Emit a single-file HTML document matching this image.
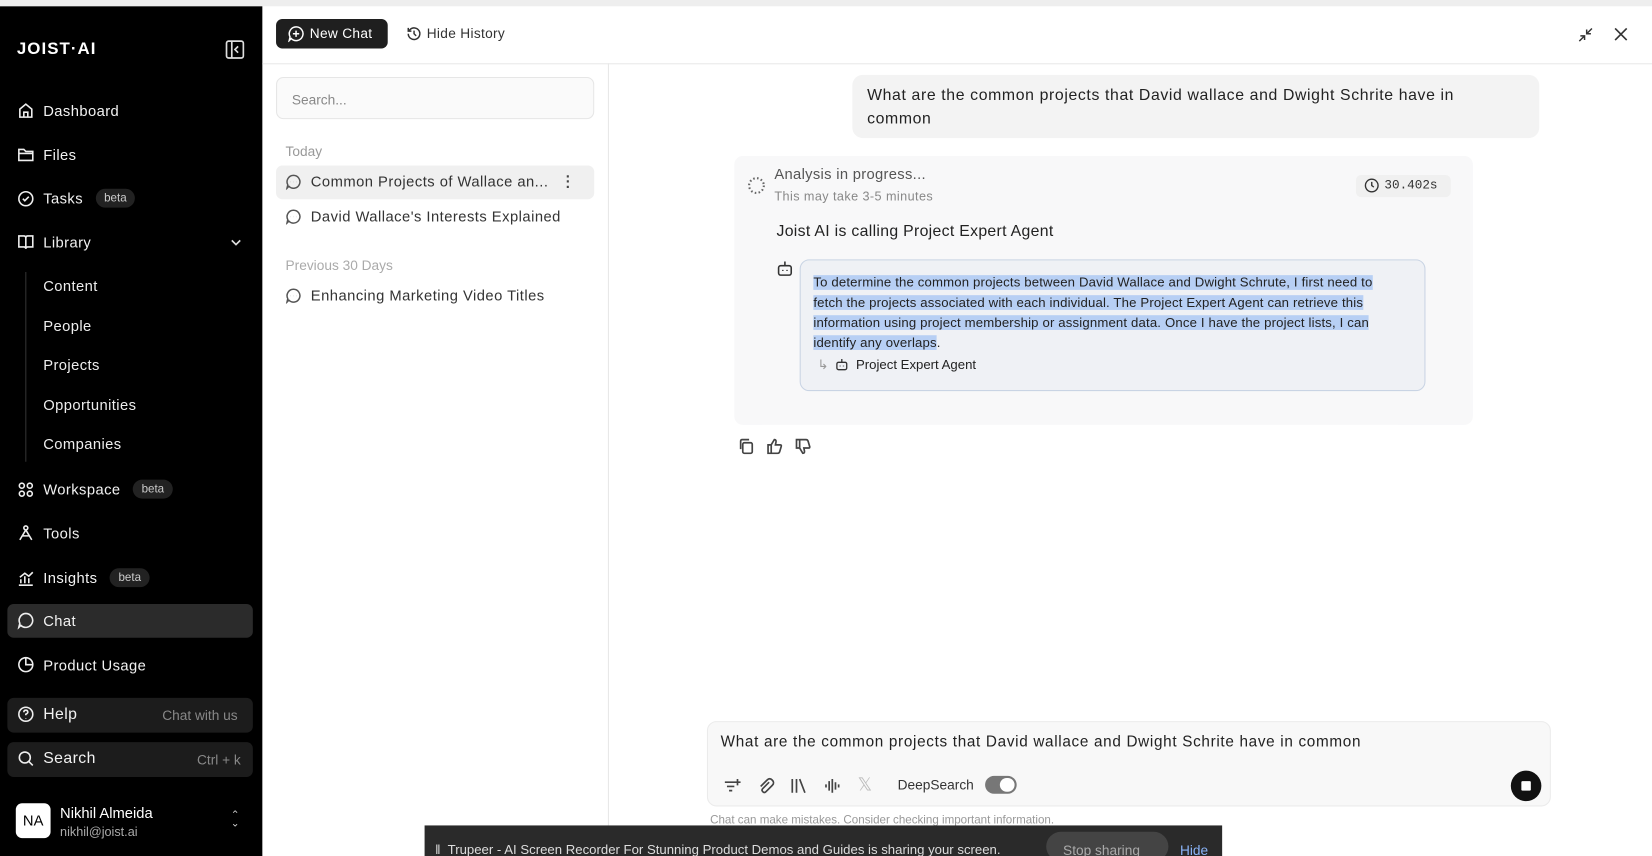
<!DOCTYPE html>
<html><head><meta charset="utf-8"><style>
*{box-sizing:border-box;margin:0;padding:0}
html,body{width:1652px;height:856px;overflow:hidden;background:#fff;font-family:"Liberation Sans",sans-serif}
#w{width:1568px;height:812px;transform:scale(1.05357,1.05419);transform-origin:0 0;position:relative;background:#fff}
.a{position:absolute}
.sb{left:0;top:6px;width:249px;height:806px;background:#000;color:#fff}
.ni{position:absolute;left:16px;font-size:14px;display:flex;align-items:center;gap:8px;color:#f2f2f2;letter-spacing:0.4px}
.ni svg{width:17px;height:17px;stroke:#eee;fill:none;stroke-width:1.6}
.sub{position:absolute;left:41px;font-size:14px;color:#eee;letter-spacing:0.4px}
.beta{background:#222;color:#ccc;font-size:11px;border-radius:10px;padding:3px 8px;margin-left:4px;letter-spacing:0}
.hist{font-size:14px;color:#333;display:flex;align-items:center;gap:9px;position:absolute;left:271px;letter-spacing:0.45px}
.hist svg{width:15px;height:15px;stroke:#555;fill:none;stroke-width:1.5}
.ic{stroke:#444;fill:none;stroke-width:1.6}
</style></head><body><div id="w">
<div class="a" style="left:0;top:0;width:1568px;height:6px;background:#eee"></div>
<div class="a sb">
 <div class="a" style="left:16px;top:32px;font-size:16px;font-weight:bold;letter-spacing:1px">JOIST·AI</div>
 <svg class="a" style="left:214px;top:32px" width="18" height="18" viewBox="0 0 18 18" fill="none" stroke="#ddd" stroke-width="1.6"><rect x="1" y="1" width="16" height="16" rx="2"/><path d="M6 1v16M12 6l-3 3 3 3"/></svg>
</div>
<div class="ni" style="top:96px"><svg viewBox="0 0 18 18"><path d="M3 8l6-5 6 5v8H3z M7 16v-5h4v5"/></svg>Dashboard</div>
<div class="ni" style="top:138px"><svg viewBox="0 0 18 18"><path d="M2 4h5l2 2h7v9H2z M2 8h14"/></svg>Files</div>
<div class="ni" style="top:179px"><svg viewBox="0 0 18 18"><circle cx="9" cy="9" r="7"/><path d="M6 9l2 2 4-4"/></svg>Tasks<span class="beta">beta</span></div>
<div class="ni" style="top:221px"><svg viewBox="0 0 18 18"><path d="M2 3h5q2 0 2 2v11q0-2-2-2H2zM16 3h-5q-2 0-2 2v11q0-2 2-2h5z"/></svg>Library</div>
<svg class="a" style="left:218px;top:225px" width="12" height="10" viewBox="0 0 12 10" fill="none" stroke="#ddd" stroke-width="1.6"><path d="M2 3l4 4 4-4"/></svg>
<div class="a" style="left:24px;top:258px;width:1px;height:180px;background:#333"></div>
<div class="sub" style="top:263px">Content</div>
<div class="sub" style="top:301px">People</div>
<div class="sub" style="top:338px">Projects</div>
<div class="sub" style="top:376px">Opportunities</div>
<div class="sub" style="top:413px">Companies</div>
<div class="ni" style="top:455px"><svg viewBox="0 0 18 18"><circle cx="5" cy="5" r="2.5"/><circle cx="13" cy="5" r="2.5"/><circle cx="5" cy="13" r="2.5"/><circle cx="13" cy="13" r="2.5"/></svg>Workspace<span class="beta">beta</span></div>
<div class="ni" style="top:497px"><svg viewBox="0 0 18 18"><circle cx="9" cy="4" r="2"/><path d="M9 6L3 16M9 6l6 10M5 12h8"/></svg>Tools</div>
<div class="ni" style="top:539px"><svg viewBox="0 0 18 18"><path d="M2 16h14M4 14V10M8 14V7M12 14V9M3 8l5-4 4 3 4-4"/></svg>Insights<span class="beta">beta</span></div>
<div class="a" style="left:7px;top:573px;width:233px;height:32px;background:#2b2b2b;border-radius:6px"></div>
<div class="ni" style="top:580px"><svg viewBox="0 0 18 18"><path d="M9 2a7 7 0 1 1-5 12L2 16l1-4A7 7 0 0 1 9 2z"/></svg>Chat</div>
<div class="ni" style="top:622px"><svg viewBox="0 0 18 18"><circle cx="9" cy="9" r="7"/><path d="M9 2v7h7"/></svg>Product Usage</div>
<div class="a" style="left:7px;top:662px;width:233px;height:33px;background:#1c1c1c;border-radius:6px"></div>
<div class="ni" style="top:669px;font-size:15px"><svg viewBox="0 0 18 18"><circle cx="9" cy="9" r="7"/><path d="M7 7q0-2 2-2t2 2q0 1-2 2v1M9 13v.5"/></svg>Help</div>
<div class="a" style="left:154px;top:671px;font-size:13px;color:#888">Chat with us</div>
<div class="a" style="left:7px;top:704px;width:233px;height:33px;background:#1c1c1c;border-radius:6px"></div>
<div class="ni" style="top:711px;font-size:15px"><svg viewBox="0 0 18 18"><circle cx="8" cy="8" r="5.5"/><path d="M12 12l4 4"/></svg>Search</div>
<div class="a" style="left:187px;top:713px;font-size:13px;color:#888">Ctrl + k</div>
<div class="a" style="left:15px;top:762px;width:33px;height:33px;background:#fff;border-radius:6px;color:#000;font-size:14px;text-align:center;line-height:33px">NA</div>
<div class="a" style="left:57px;top:763px;font-size:14px;color:#fff">Nikhil Almeida</div>
<div class="a" style="left:57px;top:782px;font-size:12px;color:#aaa">nikhil@joist.ai</div>
<div class="a" style="left:219px;top:770px;color:#ccc;font-size:10px;line-height:8px">⌃<br>⌄</div>

<div class="a" style="left:249px;top:60px;width:1319px;height:1px;background:#e8e8e8"></div>
<div class="a" style="left:577px;top:60px;width:1px;height:752px;background:#e8e8e8"></div>
<div class="a" style="left:262px;top:18px;width:106px;height:28px;background:#1f1f1f;border-radius:6px;color:#fff;font-size:13px;line-height:28px;padding-left:32px;letter-spacing:0.3px">New Chat</div>
<svg class="a" style="left:273px;top:24px" width="16" height="16" viewBox="0 0 16 16" fill="none" stroke="#fff" stroke-width="1.4"><path d="M8 1.5a6.5 6.5 0 1 1-4.6 11L1.5 14.5l.8-3.5A6.5 6.5 0 0 1 8 1.5zM8 5v6M5 8h6"/></svg>
<svg class="a" style="left:385px;top:24px" width="16" height="16" viewBox="0 0 16 16" fill="none" stroke="#333" stroke-width="1.4"><path d="M2.5 8a5.5 5.5 0 1 0 1.6-3.9L2.5 5.5M2.5 2.5v3h3M8 5v3l2 2"/></svg>
<div class="a" style="left:405px;top:24px;font-size:13px;color:#333;letter-spacing:0.3px">Hide History</div>
<svg class="a" style="left:1497px;top:25px" width="16" height="16" viewBox="0 0 16 16" fill="none" stroke="#333" stroke-width="1.4"><path d="M2 14l5-5M3 9h4v4M14 2l-5 5M9 3v4h4"/></svg>
<svg class="a" style="left:1532px;top:26px" width="13" height="13" viewBox="0 0 13 13" fill="none" stroke="#333" stroke-width="1.6"><path d="M1 1l11 11M12 1L1 12"/></svg>

<div class="a" style="left:262px;top:73px;width:302px;height:40px;background:#fafafa;border:1px solid #e6e6e6;border-radius:7px;font-size:13px;color:#888;padding:13px 14px">Search...</div>
<div class="a" style="left:271px;top:136px;font-size:13px;color:#999">Today</div>
<div class="a" style="left:262px;top:157px;width:302px;height:32px;background:#f0f0f0;border-radius:6px"></div>
<div class="hist" style="top:164px"><svg viewBox="0 0 16 16"><path d="M8 1.5a6.5 6.5 0 1 1-4.6 11L1.5 14.5l.8-3.5A6.5 6.5 0 0 1 8 1.5z"/><path d="M5 8h.1M8 8h.1M11 8h.1"/></svg>Common Projects of Wallace an...</div>
<div class="a" style="left:537px;top:165px;font-size:14px;color:#444;font-weight:bold;line-height:5px">·<br>·<br>·</div>
<div class="hist" style="top:197px"><svg viewBox="0 0 16 16"><path d="M8 1.5a6.5 6.5 0 1 1-4.6 11L1.5 14.5l.8-3.5A6.5 6.5 0 0 1 8 1.5z"/><path d="M5 8h.1M8 8h.1M11 8h.1"/></svg>David Wallace's Interests Explained</div>
<div class="a" style="left:271px;top:244px;font-size:13px;color:#aaa">Previous 30 Days</div>
<div class="hist" style="top:272px"><svg viewBox="0 0 16 16"><path d="M8 1.5a6.5 6.5 0 1 1-4.6 11L1.5 14.5l.8-3.5A6.5 6.5 0 0 1 8 1.5z"/><path d="M5 8h.1M8 8h.1M11 8h.1"/></svg>Enhancing Marketing Video Titles</div>

<div class="a" style="left:809px;top:71px;width:652px;height:60px;background:#f3f3f3;border-radius:10px;font-size:15px;color:#222;padding:9px 40px 9px 14px;line-height:22px;letter-spacing:0.6px">What are the common projects that David wallace and Dwight Schrite have in common</div>
<div class="a" style="left:697px;top:148px;width:701px;height:255px;background:#f8f8f9;border-radius:8px"></div>
<svg class="a" style="left:709px;top:167px" width="18" height="18" viewBox="0 0 18 18" fill="none" stroke="#666" stroke-width="2" stroke-dasharray="1.5 2.2"><circle cx="9" cy="9" r="7"/></svg>
<div class="a" style="left:735px;top:157px;font-size:14px;color:#555;letter-spacing:0.3px">Analysis in progress...</div>
<div class="a" style="left:735px;top:179px;font-size:12px;color:#888;letter-spacing:0.4px">This may take 3-5 minutes</div>
<div class="a" style="left:1287px;top:166px;width:90px;height:21px;background:#f0f0f0;border-radius:5px;font-family:'Liberation Mono',monospace;font-size:12px;color:#333;line-height:21px;padding-left:27px">30.402s</div>
<svg class="a" style="left:1295px;top:169px" width="14" height="14" viewBox="0 0 14 14" fill="none" stroke="#333" stroke-width="1.3"><circle cx="7" cy="7" r="6"/><path d="M7 3.5V7l2 1.5"/></svg>
<div class="a" style="left:737px;top:211px;font-size:15px;color:#222;letter-spacing:0.3px">Joist AI is calling Project Expert Agent</div>
<svg class="a" style="left:737px;top:246px" width="16" height="18" viewBox="0 0 16 18" fill="none" stroke="#333" stroke-width="1.5"><rect x="2" y="6" width="12" height="9" rx="2"/><path d="M8 2v4M6 10v1M10 10v1"/></svg>
<div class="a" style="left:759px;top:246px;width:594px;height:125px;background:#eff1f5;border:1.5px solid #c9d4e4;border-radius:9px"></div>
<div class="a" style="left:772px;top:259px;width:558px;font-size:12.5px;color:#222;line-height:19px;letter-spacing:0.15px"><span style="background:#b7cff4">To determine the common projects between David Wallace and Dwight Schrute, I first need to fetch the projects associated with each individual. The Project Expert Agent can retrieve this information using project membership or assignment data. Once I have the project lists, I can identify any overlaps</span>.</div>
<div class="a" style="left:776px;top:338px;font-size:12.5px;color:#222;display:flex;align-items:center;gap:6px"><span style="color:#999">↳</span><svg width="14" height="14" viewBox="0 0 16 18" fill="none" stroke="#333" stroke-width="1.6"><rect x="2" y="6" width="12" height="9" rx="2"/><path d="M8 2v4M6 10v1M10 10v1"/></svg>Project Expert Agent</div>
<svg class="a ic" style="left:701px;top:416px" width="15" height="15" viewBox="0 0 15 15"><rect x="4" y="4" width="9" height="10" rx="1.5"/><path d="M2 10V2.5Q2 1 3.5 1H10"/></svg>
<svg class="a ic" style="left:728px;top:416px" width="15" height="15" viewBox="0 0 15 15"><path d="M1 6h3v8H1zM4 6l3-5q2 0 1.5 2.5L8 6h4.5q1.5 0 1 1.5l-1.5 5q-.5 1.5-2 1.5H4"/></svg>
<svg class="a ic" style="left:755px;top:416px" width="15" height="15" viewBox="0 0 15 15"><path d="M1 1h3v8H1zM4 9l3 5q2 0 1.5-2.5L8 9h4.5q1.5 0 1-1.5l-1.5-5Q11.5 1 10 1H4"/></svg>

<div class="a" style="left:671px;top:684px;width:801px;height:81px;background:#f8f8f8;border:1px solid #ebebeb;border-radius:9px"></div>
<div class="a" style="left:684px;top:696px;font-size:14.5px;color:#222;letter-spacing:0.65px">What are the common projects that David wallace and Dwight Schrite have in common</div>
<div class="a" style="left:686px;top:735px;font-size:15px;color:#333;display:flex;gap:15px;align-items:center">
<svg class="ic" width="17" height="17" viewBox="0 0 17 17"><path d="M2 5h9M4 9h7M6 13h3M14 2v6M11 5h6"/></svg>
<svg class="ic" width="17" height="17" viewBox="0 0 17 17"><path d="M12 5l-6 6q-1.5 1.5 0 3t3 0l6-6q2.5-2.5 0-5t-5 0l-6 6"/></svg>
<svg class="ic" width="17" height="17" viewBox="0 0 17 17"><path d="M2 2v13M6 2v13M9 2l5 13"/></svg>
<svg class="ic" width="17" height="17" viewBox="0 0 17 17"><path d="M2 7v3M5 4v9M8 2v13M11 5v7M14 7v3"/></svg>
<span style="color:#bbb;font-size:17px">𝕏</span></div>
<div class="a" style="left:852px;top:737px;font-size:13px;color:#333">DeepSearch</div>
<div class="a" style="left:935px;top:736px;width:30px;height:17px;background:#777;border-radius:9px"></div>
<div class="a" style="left:949px;top:738px;width:14px;height:13px;background:#fff;border-radius:7px"></div>
<div class="a" style="left:1434px;top:731px;width:29px;height:29px;background:#111;border-radius:50%"></div>
<div class="a" style="left:1444px;top:741px;width:9px;height:9px;background:#fff;border-radius:1px"></div>
<div class="a" style="left:674px;top:772px;font-size:11px;color:#999">Chat can make mistakes. Consider checking important information.</div>
<div class="a" style="left:403px;top:783px;width:757px;height:29px;background:#2a2a2a"></div>
<div class="a" style="left:413px;top:799px;font-size:12.5px;color:#ddd">‖&nbsp; Trupeer - AI Screen Recorder For Stunning Product Demos and Guides is sharing your screen.</div>
<div class="a" style="left:993px;top:789px;width:116px;height:28px;background:#444;border-radius:14px;color:#aaa;font-size:13px;padding:10px 16px">Stop sharing</div>
<div class="a" style="left:1120px;top:799px;font-size:13px;color:#8ab4f8">Hide</div>
</div></body></html>
